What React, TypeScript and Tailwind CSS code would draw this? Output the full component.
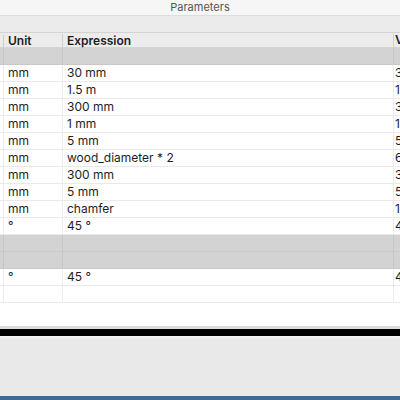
const rows: { kind: "data" | "group" | "empty"; unit?: string; expr?: string; value?: string }[] = [
  { kind: "group" },
  { kind: "data", unit: "mm", expr: "30 mm", value: "30.00 mm" },
  { kind: "data", unit: "mm", expr: "1.5 m", value: "1500.00 mm" },
  { kind: "data", unit: "mm", expr: "300 mm", value: "300.00 mm" },
  { kind: "data", unit: "mm", expr: "1 mm", value: "1.00 mm" },
  { kind: "data", unit: "mm", expr: "5 mm", value: "5.00 mm" },
  { kind: "data", unit: "mm", expr: "wood_diameter * 2", value: "60.00 mm" },
  { kind: "data", unit: "mm", expr: "300 mm", value: "300.00 mm" },
  { kind: "data", unit: "mm", expr: "5 mm", value: "5.00 mm" },
  { kind: "data", unit: "mm", expr: "chamfer", value: "1.00 mm" },
  { kind: "data", unit: "°", expr: "45 °", value: "45.0 deg" },
  { kind: "group" },
  { kind: "group" },
  { kind: "data", unit: "°", expr: "45 °", value: "45.0 deg" },
  { kind: "empty" },
];

function Row({ row }: { row: (typeof rows)[number] }) {
  const bg = row.kind === "group" ? "bg-[#d3d3d3] border-[#c8c8c8]" : "bg-white border-[#e9e9e9]";
  const line = row.kind === "group" ? "border-[#c6c6c6]" : "border-[#ececec]";
  return (
    <div className={`grid grid-cols-[4px_59px_331px_6px] h-[17px] border-b ${bg} text-[12px] leading-[16px] text-[#1e1e1e]`}>
      <div className={`border-r ${line}`} />
      <div className={`border-r ${line} pl-[4px] overflow-hidden whitespace-nowrap`}>{row.unit}</div>
      <div className={`border-r ${line} pl-[4px] overflow-hidden whitespace-nowrap`}>{row.expr}</div>
      <div className="pl-[1px] overflow-hidden whitespace-nowrap">{row.value}</div>
    </div>
  );
}

export default function App() {
  return (
    <div
      className="w-[400px] h-[400px] overflow-hidden flex flex-col bg-[#e9e9e9]"
      style={{ fontFamily: "Inter, 'Liberation Sans', sans-serif" }}
    >
      {/* title bar */}
      <div className="h-[15px] bg-[#f6f6f6] flex items-center justify-center text-[11px] text-[#555]">
        Parameters
      </div>
      {/* toolbar strip */}
      <div className="h-[17px] bg-[#ebebeb] border-t border-[#dedede]" />
      {/* table */}
      <div className="bg-white h-[294px] flex flex-col">
        <div className="grid grid-cols-[4px_59px_331px_6px] h-[16px] bg-[#ececec] border-t border-b border-[#d4d4d4] text-[12px] leading-[14px] font-semibold text-[#1e1e1e]">
          <div className="border-r border-[#cfcfcf] my-[2px]" />
          <div className="pl-[4px] border-r border-[#cfcfcf] my-[1px]">Unit</div>
          <div className="pl-[4px] border-r border-[#cfcfcf] my-[1px]">Expression</div>
          <div className="pl-[1px] overflow-hidden">V</div>
        </div>
        {rows.map((r, i) => (
          <Row key={i} row={r} />
        ))}
      </div>
      <div className="h-[3px] bg-[#dcdcdc]" />
      <div className="h-[7px] bg-black" />
      <div className="h-[2px] bg-[#f2f2f2]" />
      <div className="flex-1 bg-[#e9e9e9]" />
      <div className="h-[4px] bg-[#3b6a98]" />
    </div>
  );
}
